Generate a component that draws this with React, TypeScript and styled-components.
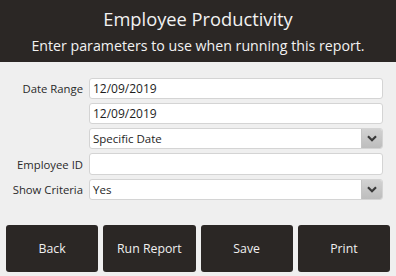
import React from "react";
import styled, { createGlobalStyle } from "styled-components";

const GlobalStyle = createGlobalStyle`
   html, body {
      margin: 0;
      padding: 0;
      width: 396px;
      height: 276px;
      overflow: hidden;
      background: #efefef;
      font-family: "Open Sans", "Noto Sans", sans-serif;
   }
`;

const Screen = styled.div`
   width: 396px;
   height: 276px;
   display: flex;
   flex-direction: column;
   background: #efefef;
`;

const Header = styled.header`
   height: 62px;
   background: #2b2725;
   color: #f2f2f2;
   display: flex;
   flex-direction: column;
   align-items: center;
`;

const Title = styled.h1`
   margin: 5px 0 0;
   font-size: 18.3px;
   font-weight: 400;
   line-height: 28px;
`;

const Subtitle = styled.div`
   font-size: 14.2px;
   line-height: 22px;
   margin-top: 2px;
`;

const Form = styled.div`
   display: grid;
   grid-template-columns: 83px 1fr;
   column-gap: 6px;
   row-gap: 4px;
   padding: 16px 13px 0 0;
`;

const Label = styled.label`
   font-size: 11.3px;
   color: #2a2a2a;
   text-align: right;
   align-self: center;
   white-space: nowrap;
`;

const Field = styled.div<{ $tall?: boolean }>`
   grid-column: 2;
   height: ${(p) => (p.$tall ? 22 : 21)}px;
   box-sizing: border-box;
   background: #fff;
   border: 1px solid #d4d4d4;
   border-radius: 3px;
   display: flex;
   align-items: center;
   padding-left: 3px;
   font-size: 12px;
   color: #1e1e1e;
   overflow: hidden;
`;

const SelectText = styled.span`
   font-size: 11.5px;
   flex: 1;
`;

const Arrow = styled.div`
   width: 20px;
   height: 100%;
   background: linear-gradient(#d2d2d2, #bdbdbd);
   border-left: 1px solid #c4c4c4;
   display: flex;
   align-items: center;
   justify-content: center;
`;

const Buttons = styled.div`
   margin-top: auto;
   display: grid;
   grid-template-columns: repeat(4, 1fr);
   column-gap: 5px;
   padding: 0 6px 4px;
`;

const Button = styled.button`
   height: 47px;
   background: #2b2725;
   color: #f0f0f0;
   border: none;
   border-radius: 3px;
   font-family: "Open Sans", "Noto Sans", sans-serif;
   font-size: 12.3px;
   padding: 0;
`;

const Chevron = () => (
   <svg width="10" height="7" viewBox="0 0 10 7">
      <path d="M1 1.2 L5 5.2 L9 1.2" fill="none" stroke="#3a3a3a" strokeWidth="2.2" />
   </svg>
);

const Select = ({ value }: { value: string }) => (
   <Field>
      <SelectText>{value}</SelectText>
      <Arrow>
         <Chevron />
      </Arrow>
   </Field>
);

export default function App() {
   return (
      <Screen>
         <GlobalStyle />
         <Header>
            <Title>Employee Productivity</Title>
            <Subtitle>Enter parameters to use when running this report.</Subtitle>
         </Header>
         <Form>
            <Label>Date Range</Label>
            <Field>12/09/2019</Field>
            <Field>12/09/2019</Field>
            <Select value="Specific Date" />
            <Label>Employee ID</Label>
            <Field $tall />
            <Label>Show Criteria</Label>
            <Select value="Yes" />
         </Form>
         <Buttons>
            <Button>Back</Button>
            <Button>Run Report</Button>
            <Button>Save</Button>
            <Button>Print</Button>
         </Buttons>
      </Screen>
   );
}
